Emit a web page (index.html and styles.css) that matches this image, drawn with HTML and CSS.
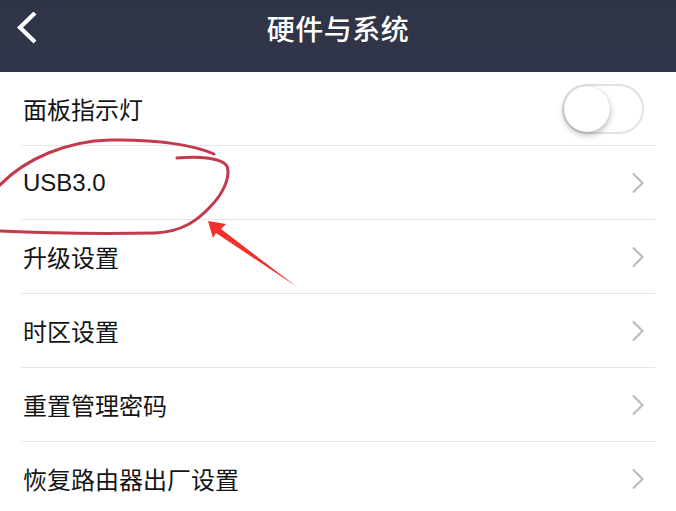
FILE: index.html
```html
<!DOCTYPE html>
<html lang="zh-CN">
<head>
<meta charset="utf-8">
<title>硬件与系统</title>
<link rel="stylesheet" href="styles.css">
</head>
<body>
<div class="page">
  <header class="topbar">
    <span class="back">
      <svg width="24" height="36" viewBox="0 0 24 36"><path d="M20 1 L5 15.5 L20 30" fill="none" stroke="#fff" stroke-width="4.2" stroke-linecap="butt" stroke-linejoin="miter"/></svg>
    </span>
    <h1 class="title">硬件与系统</h1>
  </header>
  <ul class="list">
    <li class="row"><span class="label">面板指示灯</span><span class="switch"><span class="knob"></span></span></li>
    <li class="row"><span class="label latin">USB3.0</span><span class="chev"><svg width="14" height="22" viewBox="0 0 14 22"><path d="M2 1.5 L11.5 11 L2 20.5" fill="none" stroke="#bdbdbd" stroke-width="2.2"/></svg></span></li>
    <li class="row"><span class="label">升级设置</span><span class="chev"><svg width="14" height="22" viewBox="0 0 14 22"><path d="M2 1.5 L11.5 11 L2 20.5" fill="none" stroke="#bdbdbd" stroke-width="2.2"/></svg></span></li>
    <li class="row"><span class="label">时区设置</span><span class="chev"><svg width="14" height="22" viewBox="0 0 14 22"><path d="M2 1.5 L11.5 11 L2 20.5" fill="none" stroke="#bdbdbd" stroke-width="2.2"/></svg></span></li>
    <li class="row"><span class="label">重置管理密码</span><span class="chev"><svg width="14" height="22" viewBox="0 0 14 22"><path d="M2 1.5 L11.5 11 L2 20.5" fill="none" stroke="#bdbdbd" stroke-width="2.2"/></svg></span></li>
    <li class="row"><span class="label">恢复路由器出厂设置</span><span class="chev"><svg width="14" height="22" viewBox="0 0 14 22"><path d="M2 1.5 L11.5 11 L2 20.5" fill="none" stroke="#bdbdbd" stroke-width="2.2"/></svg></span></li>
  </ul>
  <svg class="markup" width="676" height="511" viewBox="0 0 676 511">
    <path d="M214,154 C196,146 160,139 110,140 C68,141 25,158 -2,187" fill="none" stroke="#c23a4b" stroke-width="3" stroke-linecap="round"/>
    <path d="M177,158 C200,156 222,158 227,166 C231,178 222,195 210,207 C198,220 182,232 155,233 C100,234 40,233 -2,231" fill="none" stroke="#c23a4b" stroke-width="3" stroke-linecap="round"/>
    <polygon points="208,221 226,224 221,229 297,287 216,233 213,238" fill="#f2302c"/>
  </svg>
</div>
</body>
</html>
```
FILE: styles.css
```css
* { box-sizing: border-box; }
html, body { margin: 0; padding: 0; background: #fff; }
body {
  font-family: "Noto Sans CJK SC", "Noto Sans", sans-serif;
  width: 676px;
  height: 511px;
  overflow: hidden;
}
.page { position: relative; width: 676px; height: 511px; overflow: hidden; }
.topbar {
  height: 72px;
  background: linear-gradient(#2f3445, #30354a);
  display: flex;
  align-items: flex-start;
  justify-content: center;
  position: relative;
}
.back {
  position: absolute;
  left: 15px;
  top: 12px;
  width: 24px;
  height: 36px;
  display: block;
}
.back svg { display: block; }
.title {
  margin: 0;
  padding-top: 9px;
  font-size: 28px;
  line-height: 38px;
  font-weight: 500;
  color: #fff;
  letter-spacing: 0.5px;
}
.list { list-style: none; margin: 0; padding: 0; }
.row {
  height: 74px;
  margin: 0 21px;
  padding-left: 2px;
  border-bottom: 1px solid #e6e6e6;
  display: flex;
  align-items: center;
  justify-content: space-between;
}
.label {
  font-size: 24px;
  color: #151515;
  line-height: 30px;
}
.latin { font-family: "Liberation Sans", "Noto Sans CJK SC", sans-serif; font-size: 24px; }
.chev { width: 14px; height: 22px; margin-right: 10px; display: block; }
.chev svg { display: block; }
.switch {
  width: 82px;
  height: 50px;
  border: 2px solid #e2e2e2;
  border-radius: 25px;
  background: #fff;
  position: relative;
  margin-right: 11px;
}
.knob {
  position: absolute;
  left: 0;
  top: 0;
  width: 46px;
  height: 46px;
  border-radius: 50%;
  background: #fff;
  box-shadow: 0 3px 6px rgba(0,0,0,0.28), 0 0 1px rgba(0,0,0,0.2);
}
.markup { position: absolute; left: 0; top: 0; pointer-events: none; }
```
